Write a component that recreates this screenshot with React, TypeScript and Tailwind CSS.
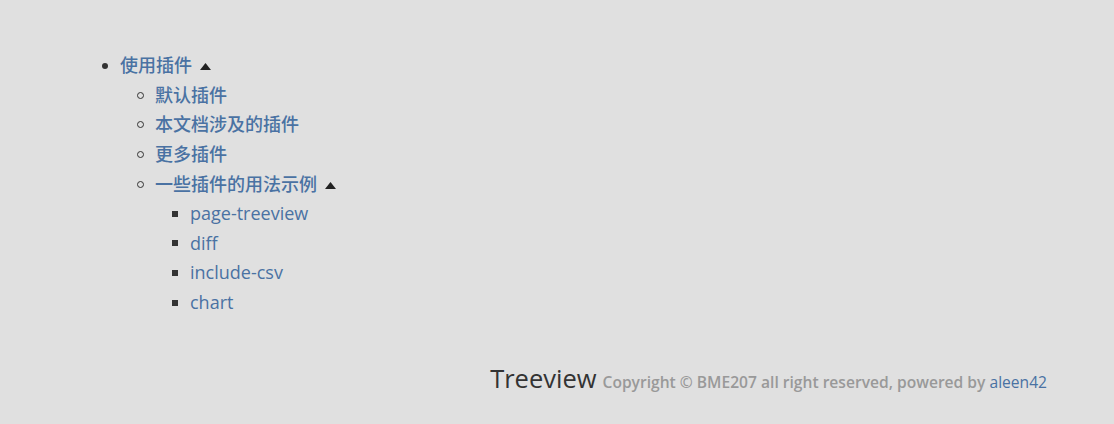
const font = { fontFamily: '"Open Sans", "Noto Sans CJK SC", sans-serif' };

type Node = { label: string; children?: Node[] };

const TREE: Node[] = [
  {
    label: "使用插件",
    children: [
      { label: "默认插件" },
      { label: "本文档涉及的插件" },
      { label: "更多插件" },
      {
        label: "一些插件的用法示例",
        children: [
          { label: "page-treeview" },
          { label: "diff" },
          { label: "include-csv" },
          { label: "chart" },
        ],
      },
    ],
  },
];

function Marker({ level }: { level: number }) {
  if (level === 0) return <span className="h-[6px] w-[6px] rounded-full bg-[#333]" />;
  if (level === 1) return <span className="h-[7px] w-[7px] rounded-full border border-[#333]" />;
  return <span className="h-[6px] w-[6px] bg-[#333]" />;
}

function Caret() {
  return (
    <svg width="11" height="7" viewBox="0 0 11 7" className="ml-[8px] mt-[2px]">
      <path d="M0 7 L5.5 0 L11 7 Z" fill="#222" />
    </svg>
  );
}

function Tree({ nodes, level }: { nodes: Node[]; level: number }) {
  return (
    <ul>
      {nodes.map((n) => (
        <li key={n.label}>
          <div className="flex h-[29.6px] items-center">
            <span className="flex w-[19px] shrink-0 items-center justify-start pl-[1px]">
              <Marker level={level} />
            </span>
            <a className="text-[18px] font-medium text-[#4a72a3]">{n.label}</a>
            {n.children && <Caret />}
          </div>
          {n.children && (
            <div className="pl-[35px]">
              <Tree nodes={n.children} level={level + 1} />
            </div>
          )}
        </li>
      ))}
    </ul>
  );
}

export default function App() {
  return (
    <div className="h-[424px] w-[1114px] bg-[#e0e0e0] pt-[51px]" style={font}>
      <div className="pl-[101px]">
        <Tree nodes={TREE} level={0} />
      </div>
      <footer className="mt-[42px] flex items-baseline justify-end pr-[67px]">
        <span className="text-[25.5px] text-[#333]">Treeview</span>
        <span className="ml-[6px] text-[15.6px] font-semibold text-[#999]">
          Copyright © BME207 all right reserved, powered by{" "}
          <a className="font-normal text-[#4a72a3]">aleen42</a>
        </span>
      </footer>
    </div>
  );
}
